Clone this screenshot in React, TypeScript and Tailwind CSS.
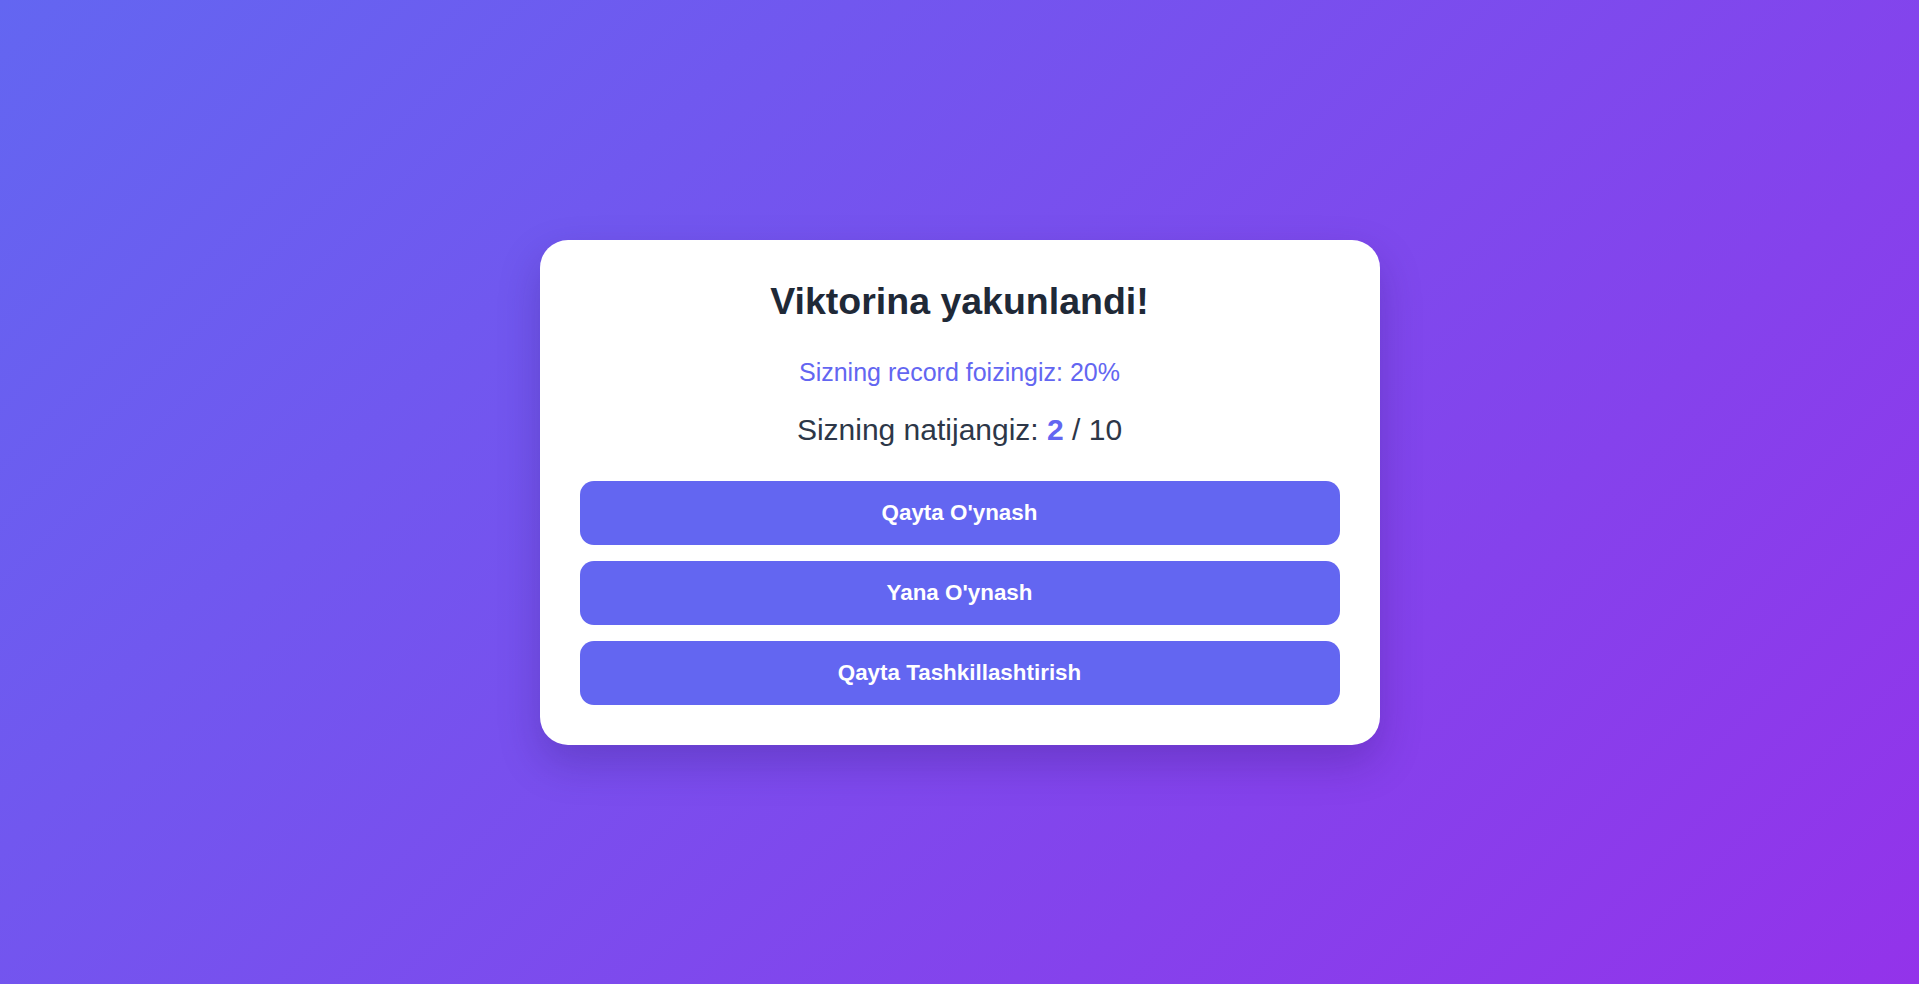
import React from "react";

type ResultProps = {
    score: number;
    total: number;
    record: number;
};

const buttons = ["Qayta O'ynash", "Yana O'ynash", "Qayta Tashkillashtirish"];

function ResultCard({ score, total, record }: ResultProps) {
    return (
        <div className="w-[840px] bg-white rounded-[28px] p-10 text-center shadow-[0_18px_40px_rgba(40,20,100,0.25)]">
            <h1 className="text-[37.5px] leading-[normal] font-bold text-[#1f2937] mb-[35px]">
                Viktorina yakunlandi!
            </h1>
            <p className="text-[25px] leading-[normal] text-[#6366f1] mb-[26px]">
                Sizning record foizingiz: {record}%
            </p>
            <p className="text-[30px] leading-[normal] text-[#2d3748] mb-[34px]">
                Sizning natijangiz: <span className="font-bold text-[#6366f1]">{score}</span> / {total}
            </p>
            <div className="flex flex-col gap-4">
                {buttons.map((label) => (
                    <button
                        key={label}
                        className="h-16 w-full rounded-[14px] bg-[#6366f1] text-white text-[22.4px] font-bold"
                    >
                        {label}
                    </button>
                ))}
            </div>
        </div>
    );
}

export default function App() {
    return (
        <div
            className="min-h-screen w-full flex items-center justify-center bg-[linear-gradient(135deg,#6366f1,#9333ea)]"
            style={{ fontFamily: '"Liberation Sans", Arial, sans-serif' }}
        >
            <ResultCard score={2} total={10} record={20} />
        </div>
    );
}
